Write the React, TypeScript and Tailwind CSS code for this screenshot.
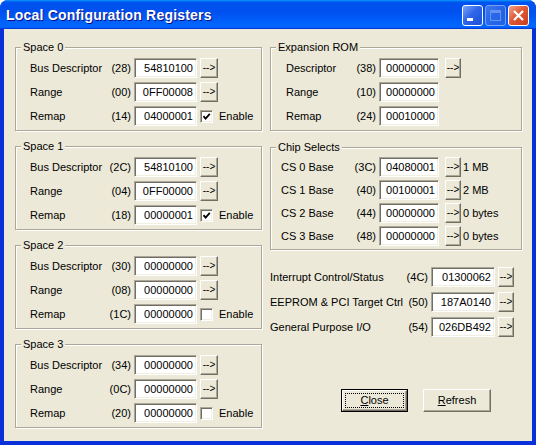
import React from 'react';

type RowProps = {
  label: string;
  reg: string;
  value: string;
  labelW: string;
  editW: string;
  after?: React.ReactNode;
};

const Edit: React.FC<{ value: string; w: string }> = ({ value, w }) => (
  <div
    className={`${w} h-[20px] shrink-0 bg-white border border-[#aca899] border-r-white border-b-white shadow-[inset_1px_1px_0_#716f64,inset_-1px_-1px_0_#f1efe2] flex items-center justify-end pr-[3px] leading-none`}
  >
    {value}
  </div>
);

const ArrowBtn: React.FC<{ w: string; ml: string }> = ({ w, ml }) => (
  <div
    className={`${w} ${ml} h-[20px] shrink-0 bg-[#ece9d8] border border-white border-r-[#716f64] border-b-[#716f64] shadow-[inset_-1px_-1px_0_#aca899] flex items-center justify-center text-[10px] leading-none pb-[1px]`}
  >
    --&gt;
  </div>
);

const Check: React.FC<{ checked: boolean }> = ({ checked }) => (
  <div className="ml-[3px] flex items-center">
    <div className="w-[13px] h-[13px] bg-white border border-[#aca899] border-r-white border-b-white shadow-[inset_1px_1px_0_#716f64,inset_-1px_-1px_0_#f1efe2] flex items-center justify-center">
      {checked && (
        <svg width="9" height="9" viewBox="0 0 9 9">
          <path d="M1.5 4.2 L3.6 6.6 L7.8 1.8" stroke="#000" strokeWidth="1.8" fill="none" />
        </svg>
      )}
    </div>
    <span className="ml-[6px]">Enable</span>
  </div>
);

const Row: React.FC<RowProps> = ({ label, reg, value, labelW, editW, after }) => (
  <div className="flex items-center h-[20px]">
    <span className={`${labelW} shrink-0 whitespace-nowrap`}>{label}</span>
    <span className="w-[26px] shrink-0 text-right">({reg})</span>
    <div className="ml-[3px] flex">
      <Edit value={value} w={editW} />
    </div>
    {after}
  </div>
);

const Group: React.FC<{ title: string; className: string; children: React.ReactNode }> = ({
  title,
  className,
  children,
}) => (
  <div
    className={`relative border border-[#aca899] shadow-[1px_1px_0_#fff,inset_1px_1px_0_#fff] ${className}`}
  >
    <span className="absolute -top-[8px] left-[5px] px-[2px] bg-[#ece9d8] leading-[14px]">{title}</span>
    {children}
  </div>
);

const spaces = [
  { title: 'Space 0', regs: ['28', '00', '14'], vals: ['54810100', '0FF00008', '04000001'], on: true },
  { title: 'Space 1', regs: ['2C', '04', '18'], vals: ['54810100', '0FF00000', '00000001'], on: true },
  { title: 'Space 2', regs: ['30', '08', '1C'], vals: ['00000000', '00000000', '00000000'], on: false },
  { title: 'Space 3', regs: ['34', '0C', '20'], vals: ['00000000', '00000000', '00000000'], on: false },
];

const chips = [
  { label: 'CS 0 Base', reg: '3C', value: '04080001', size: '1 MB' },
  { label: 'CS 1 Base', reg: '40', value: '00100001', size: '2 MB' },
  { label: 'CS 2 Base', reg: '44', value: '00000000', size: '0 bytes' },
  { label: 'CS 3 Base', reg: '48', value: '00000000', size: '0 bytes' },
];

const misc = [
  { label: 'Interrupt Control/Status', reg: '4C', value: '01300062' },
  { label: 'EEPROM & PCI Target Ctrl', reg: '50', value: '187A0140' },
  { label: 'General Purpose I/O', reg: '54', value: '026DB492' },
];

export default function App() {
  return (
    <div className="w-[536px] h-[445px] bg-white font-['Liberation_Sans',Arial,sans-serif]">
      <div className="w-[536px] h-[445px] rounded-t-[8px] overflow-hidden bg-[#0831d9] flex flex-col">
        {/* title bar */}
        <div className="h-[29px] shrink-0 flex items-start bg-[linear-gradient(180deg,#0997ff,#0053ee_8%,#0050ee_40%,#06f_88%,#06f_93%,#005bff_95%,#003dd7_96%,#003dd7)]">
          <span className="pl-[6px] pt-[1px] leading-[29px] text-[14px] font-bold text-white tracking-[0.2px] [text-shadow:1px_1px_#0f1089]">
            Local Configuration Registers
          </span>
          <div className="ml-auto mr-[7px] mt-[5px] flex gap-[2px]">
            <div className="relative w-[21px] h-[21px] rounded-[3px] border border-white bg-[linear-gradient(135deg,#78a4f8,#2f66e8_45%,#1b4fd8)]">
              <div className="absolute left-[4px] bottom-[4px] w-[6px] h-[3px] bg-white" />
            </div>
            <div className="relative w-[21px] h-[21px] rounded-[3px] border border-[#a9c0f0] bg-[linear-gradient(135deg,#5a8cf0,#3b6de6_45%,#2d5fde)] opacity-70">
              <div className="absolute left-[4px] top-[4px] w-[11px] h-[11px] border border-[#8fb0f0] border-t-[3px]" />
            </div>
            <div className="w-[21px] h-[21px] rounded-[3px] border border-white bg-[linear-gradient(135deg,#f0a58e,#e05a36_45%,#c73d1c)] flex items-center justify-center">
              <svg width="13" height="13" viewBox="0 0 13 13">
                <path d="M2 2 L11 11 M11 2 L2 11" stroke="#fff" strokeWidth="2.2" />
              </svg>
            </div>
          </div>
        </div>

        {/* client area */}
        <div className="flex-1 px-[4px] pb-[4px]">
          <div className="h-full bg-[#ece9d8] text-[11px] text-black flex pl-[11px] pt-[18px]">
            {/* left column */}
            <div className="w-[247px] flex flex-col gap-[15px]">
              {spaces.map((s) => (
                <Group key={s.title} title={s.title} className="h-[84px] pl-[14px] pt-[10px]">
                  <div className="flex flex-col gap-[4px]">
                    <Row
                      label="Bus Descriptor"
                      reg={s.regs[0]}
                      value={s.vals[0]}
                      labelW="w-[75px]"
                      editW="w-[63px]"
                      after={<ArrowBtn w="w-[18px]" ml="ml-[3px]" />}
                    />
                    <Row
                      label="Range"
                      reg={s.regs[1]}
                      value={s.vals[1]}
                      labelW="w-[75px]"
                      editW="w-[63px]"
                      after={<ArrowBtn w="w-[18px]" ml="ml-[3px]" />}
                    />
                    <Row
                      label="Remap"
                      reg={s.regs[2]}
                      value={s.vals[2]}
                      labelW="w-[75px]"
                      editW="w-[63px]"
                      after={<Check checked={s.on} />}
                    />
                  </div>
                </Group>
              ))}
            </div>

            {/* right column */}
            <div className="w-[252px] ml-[8px] flex flex-col">
              <Group title="Expansion ROM" className="h-[84px] pl-[15px] pt-[10px]">
                <div className="flex flex-col gap-[4px]">
                  <Row
                    label="Descriptor"
                    reg="38"
                    value="00000000"
                    labelW="w-[64px]"
                    editW="w-[60px]"
                    after={<ArrowBtn w="w-[16px]" ml="ml-[6px]" />}
                  />
                  <Row label="Range" reg="10" value="00000000" labelW="w-[64px]" editW="w-[60px]" />
                  <Row label="Remap" reg="24" value="00010000" labelW="w-[64px]" editW="w-[60px]" />
                </div>
              </Group>

              <Group title="Chip Selects" className="mt-[16px] h-[103px] pl-[10px] pt-[9px]">
                <div className="flex flex-col gap-[3px]">
                  {chips.map((c) => (
                    <Row
                      key={c.reg}
                      label={c.label}
                      reg={c.reg}
                      value={c.value}
                      labelW="w-[69px]"
                      editW="w-[60px]"
                      after={
                        <>
                          <ArrowBtn w="w-[16px]" ml="ml-[6px]" />
                          <span className="ml-[2px]">{c.size}</span>
                        </>
                      }
                    />
                  ))}
                </div>
              </Group>

              <div className="mt-[17px] flex flex-col gap-[5px]">
                {misc.map((m) => (
                  <Row
                    key={m.reg}
                    label={m.label}
                    reg={m.reg}
                    value={m.value}
                    labelW="w-[132px]"
                    editW="w-[64px]"
                    after={<ArrowBtn w="w-[16px]" ml="ml-[3px]" />}
                  />
                ))}
              </div>

              <div className="mt-[52px] pl-[71px] flex gap-[15px]">
                <div className="w-[67px] h-[23px] border border-black">
                  <div className="h-full border border-white border-r-[#716f64] border-b-[#716f64] shadow-[inset_-1px_-1px_0_#aca899] p-[2px]">
                    <div className="h-full border border-dotted border-black flex items-center justify-center">
                      <span>
                        <span className="underline">C</span>lose
                      </span>
                    </div>
                  </div>
                </div>
                <div className="w-[68px] h-[23px] border border-white border-r-[#716f64] border-b-[#716f64] shadow-[inset_-1px_-1px_0_#aca899] flex items-center justify-center">
                  <span>
                    <span className="underline">R</span>efresh
                  </span>
                </div>
              </div>
            </div>
          </div>
        </div>
      </div>
    </div>
  );
}
